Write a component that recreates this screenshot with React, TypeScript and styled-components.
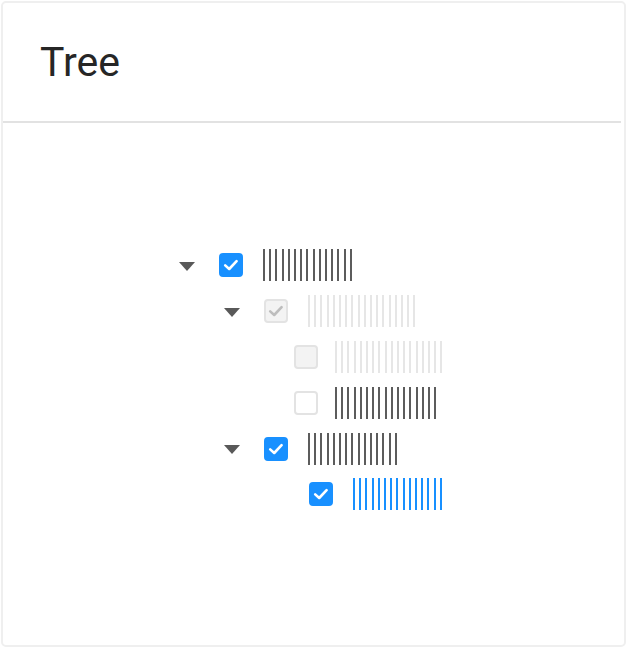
import React from "react";
import styled, { createGlobalStyle } from "styled-components";

const Global = createGlobalStyle`
  html, body { margin: 0; padding: 0; background: #fff; }
  body { font-family: Roboto, "Noto Sans", Arial, sans-serif; }
`;

const Card = styled.div`
  margin: 1px;
  width: 621px;
  height: 642px;
  border: 2px solid #efefef;
  border-radius: 5px;
  background: #fff;
  display: flex;
  flex-direction: column;
`;

const Header = styled.div`
  height: 120px;
  margin-right: 3px;
  border-bottom: 2px solid #e2e2e2;
  display: flex;
  align-items: center;
  padding-left: 37px;
  box-sizing: border-box;
`;

const Title = styled.h1`
  margin: 0;
  font-family: Roboto, sans-serif;
  font-weight: 400;
  font-size: 41px;
  color: #262626;
  letter-spacing: 0;
`;

const Body = styled.div`
  padding-top: 119.5px;
  display: flex;
  flex-direction: column;
`;

const Row = styled.div<{ $indent: number }>`
  height: 45.8px;
  display: flex;
  align-items: center;
  padding-left: ${(p) => p.$indent}px;
`;

const CaretSlot = styled.div`
  width: 36px;
  display: flex;
  justify-content: center;
  align-items: center;
  margin-right: 14px;
`;

const Caret = styled.span<{ $hidden?: boolean }>`
  width: 0;
  height: 0;
  border-left: 8.5px solid transparent;
  border-right: 8.5px solid transparent;
  border-top: 9px solid #595959;
  margin-top: 2px;
  visibility: ${(p) => (p.$hidden ? "hidden" : "visible")};
`;

const Box = styled.span<{ $checked: boolean; $disabled: boolean }>`
  width: 24px;
  height: 24px;
  box-sizing: border-box;
  border-radius: 4px;
  display: flex;
  align-items: center;
  justify-content: center;
  flex: none;
  border: 2px solid
    ${(p) => (p.$disabled ? "#e3e3e3" : p.$checked ? "#1890ff" : "#e3e3e3")};
  background: ${(p) =>
    p.$disabled ? "#f3f3f3" : p.$checked ? "#1890ff" : "#fff"};
`;

const Label = styled.span<{ $tone: "dark" | "light" | "blue"; $gap: number }>`
  display: inline-block;
  height: 32px;
  margin-left: ${(p) => p.$gap}px;
  background: repeating-linear-gradient(
    to right,
    ${(p) =>
        p.$tone === "dark" ? "#5c5c5c" : p.$tone === "blue" ? "#1890ff" : "#e6e6e6"}
      0 2px,
    transparent 2px 6.2px
  );
`;

type Node = {
  indent: number;
  caret: boolean;
  checked: boolean;
  disabled: boolean;
  tone: "dark" | "light" | "blue";
  bars: number;
  gap?: number;
};

const nodes: Node[] = [
  { indent: 166, caret: true, checked: true, disabled: false, tone: "dark", bars: 15 },
  { indent: 211, caret: true, checked: true, disabled: true, tone: "light", bars: 18 },
  { indent: 240.5, caret: false, checked: false, disabled: true, tone: "light", bars: 18, gap: 17.5 },
  { indent: 240.5, caret: false, checked: false, disabled: false, tone: "dark", bars: 17, gap: 17.5 },
  { indent: 211, caret: true, checked: true, disabled: false, tone: "dark", bars: 15 },
  { indent: 256, caret: false, checked: true, disabled: false, tone: "blue", bars: 15 },
];

const Check = ({ color }: { color: string }) => (
  <svg width="18" height="18" viewBox="0 0 18 18">
    <polyline
      points="3.2,9.4 7.2,13 14.6,5.2"
      fill="none"
      stroke={color}
      strokeWidth="2.6"
      strokeLinecap="round"
      strokeLinejoin="round"
    />
  </svg>
);

export default function App() {
  return (
    <>
      <Global />
      <Card>
        <Header>
          <Title>Tree</Title>
        </Header>
        <Body>
          {nodes.map((n, i) => (
            <Row key={i} $indent={n.indent}>
              <CaretSlot>
                <Caret $hidden={!n.caret} />
              </CaretSlot>
              <Box $checked={n.checked} $disabled={n.disabled}>
                {n.checked && <Check color={n.disabled ? "#bdbdbd" : "#fff"} />}
              </Box>
              <Label
                $tone={n.tone}
                $gap={n.gap ?? 20}
                style={{ width: n.bars * 6.2 - 4.2 }}
              />
            </Row>
          ))}
        </Body>
      </Card>
    </>
  );
}
